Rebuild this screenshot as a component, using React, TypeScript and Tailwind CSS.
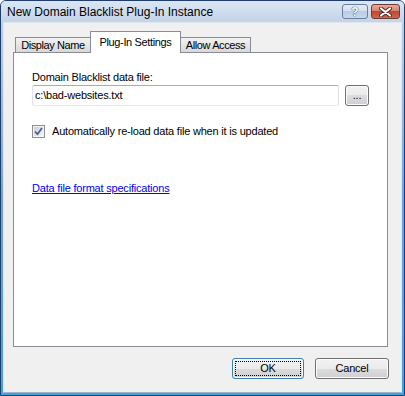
import React from "react";

const ui = { fontFamily: '"Liberation Sans", Arial, sans-serif' };

const Tab = ({ label, active, className = "" }: { label: string; active?: boolean; className?: string }) => (
  <div
    className={
      active
        ? "relative z-10 -mb-px flex h-[22px] w-[91px] items-start justify-center border border-b-0 border-[#898c95] bg-white pt-[4px] tracking-[-0.35px] text-black " + className
        : "flex h-[15px] items-center justify-center border border-b-0 border-[#898c95] bg-gradient-to-b from-[#f3f3f3] to-[#d8d8d8] tracking-[-0.4px] text-black " + className
    }
  >
    {label}
  </div>
);

const Button = ({ label, width, focused }: { label: string; width: string; focused?: boolean }) => (
  <div
    className={
      "relative flex h-[21px] items-center justify-center rounded-[3px] border bg-[linear-gradient(#f2f2f2_0%,#ebebeb_50%,#dddddd_50%,#cfcfcf_100%)] shadow-[inset_0_0_0_1px_#fcfcfc] " +
      width +
      (focused ? " border-[#3c7fb1]" : " border-[#707070]")
    }
  >
    {focused && <div className="absolute inset-[2px] border border-dotted border-black" />}
    <span className="relative">{label}</span>
  </div>
);

export default function App() {
  return (
    <div
      style={ui}
      className="flex h-[396px] w-[405px] flex-col rounded-t-[6px] border border-[#1f3d6e] bg-gradient-to-b from-[#c6d6ea] via-[#6ea5db] to-[#3aa6de] text-[11px] leading-[13px] tracking-[-0.2px]"
    >
      {/* title bar */}
      <div className="flex h-[21px] shrink-0 items-start rounded-t-[5px] bg-gradient-to-b from-[#dbe6f3] to-[#c3d4e8] pl-[6px] pr-[4px] tracking-normal">
        <span className="mt-[4px] text-[12px] leading-[15px] text-black">New Domain Blacklist Plug-In Instance</span>
        <div className="ml-auto mt-[3px] flex gap-[3px]">
          <div className="flex h-[15px] w-[26px] items-center justify-center rounded-[3px] border border-[#6a7e9e] bg-[linear-gradient(#e4ecf6_0%,#d2def0_50%,#b9cce6_50%,#c8d8ee_100%)]">
            <span className="text-[12px] font-bold leading-[12px] text-white [text-shadow:0_0_1px_#33415a,0_0_1px_#33415a]">?</span>
          </div>
          <div className="flex h-[15px] w-[29px] items-center justify-center rounded-[3px] border border-[#6e3a33] bg-[linear-gradient(#e8a99b_0%,#d7806c_50%,#c14630_50%,#d0664a_100%)]">
            <svg width="13" height="10" viewBox="0 0 13 10">
              <path d="M2 1.5 L11 8.5 M11 1.5 L2 8.5" stroke="#4a2a26" strokeWidth="4" strokeLinecap="round" />
              <path d="M2 1.5 L11 8.5 M11 1.5 L2 8.5" stroke="#ffffff" strokeWidth="2.2" strokeLinecap="round" />
            </svg>
          </div>
        </div>
      </div>

      {/* client area */}
      <div className="mx-[2px] mb-[2px] flex flex-1 flex-col border border-[#dfe7f1] border-b-[#9fb4cc] bg-[#f0f0f0] pt-[9px] pb-[12px]">
        <div className="ml-[9px] flex h-[20px] items-end pl-[2px]">
          <Tab label="Display Name" className="w-[75px] border-r-0" />
          <Tab label="Plug-In Settings" active />
          <Tab label="Allow Access" className="w-[70px] border-l-0" />
        </div>

        <div className="ml-[9px] flex h-[295px] w-[375px] flex-col border border-[#898c95] bg-white pl-[18px] pt-[18px] text-black">
          <div>Domain Blacklist data file:</div>
          <div className="mt-[1px] flex gap-[6px]">
            <div className="flex h-[21px] w-[307px] items-center rounded-[2px] border border-[#abadb3] border-b-[#e3e9ef] border-l-[#e2e3ea] border-r-[#dbdfe6] pl-[2px]">
              c:\bad-websites.txt
            </div>
            <Button label="..." width="w-[24px]" />
          </div>

          <div className="mt-[19px] flex items-center gap-[7px]">
            <div className="flex h-[13px] w-[13px] items-center justify-center border border-[#8e8f8f] bg-white">
              <div className="flex h-[11px] w-[11px] items-center justify-center border border-[#f4f4f4] bg-gradient-to-br from-[#cbcfd5] to-[#f6f6f6]">
                <svg width="9" height="9" viewBox="0 0 9 9">
                  <path d="M1 4.5 L3.5 7.2 L8 1" fill="none" stroke="#4a5f97" strokeWidth="1.8" />
                </svg>
              </div>
            </div>
            <span>Automatically re-load data file when it is updated</span>
          </div>

          <div className="mt-[44px]">
            <span className="text-[#0000ff] underline underline-offset-[1px]">Data file format specifications</span>
          </div>
        </div>

        <div className="mt-[11px] flex justify-end gap-[11px] pr-[12px] text-black">
          <Button label="OK" width="w-[72px]" focused />
          <Button label="Cancel" width="w-[74px]" />
        </div>
      </div>
    </div>
  );
}
